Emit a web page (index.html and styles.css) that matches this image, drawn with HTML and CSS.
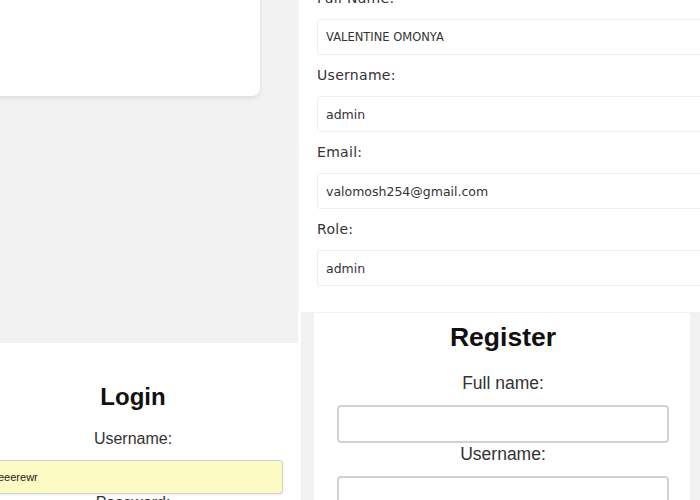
FILE: index.html
```html
<!DOCTYPE html>
<html lang="en">
<head>
<meta charset="utf-8">
<title>Screens</title>
<link rel="stylesheet" href="styles.css">
</head>
<body>
<div class="collage">
  <div class="col col-left">
    <section class="shot dash">
      <div class="dash-card"></div>
    </section>
    <section class="shot login">
      <form class="login-form">
        <h2 class="login-title">Login</h2>
        <label class="login-label">Username:</label>
        <input class="login-input" type="text" value="eeerewr">
        <label class="login-label">Password:</label>
      </form>
    </section>
  </div>
  <div class="col col-right">
    <section class="shot profile">
      <form class="profile-form">
        <label class="p-label">Full Name:</label>
        <input class="p-input caps" type="text" value="VALENTINE OMONYA" readonly>
        <label class="p-label">Username:</label>
        <input class="p-input" type="text" value="admin" readonly>
        <label class="p-label">Email:</label>
        <input class="p-input" type="text" value="valomosh254@gmail.com" readonly>
        <label class="p-label">Role:</label>
        <input class="p-input" type="text" value="admin" readonly>
      </form>
    </section>
    <section class="shot register">
      <form class="reg-card">
        <h2 class="reg-title">Register</h2>
        <label class="reg-label">Full name:</label>
        <input class="reg-input" type="text">
        <label class="reg-label">Username:</label>
        <input class="reg-input" type="text">
      </form>
    </section>
  </div>
</div>
</body>
</html>
```
FILE: styles.css
```css
* { box-sizing: border-box; }
html, body { margin: 0; padding: 0; }
body {
  width: 700px;
  height: 500px;
  overflow: hidden;
  background: #ffffff;
  font-family: "Liberation Sans", Arial, sans-serif;
}
.collage {
  display: flex;
  width: 700px;
  height: 500px;
}
.col {
  display: flex;
  flex-direction: column;
  height: 500px;
}
.col-left { width: 298px; }
.col-right { flex: 1; background: #ffffff; min-width: 0; }
.shot { overflow: hidden; }

/* top-left: dashboard fragment */
.dash {
  height: 343px;
  flex-shrink: 0;
  background: #f2f2f2;
  padding-right: 1px;
}
.dash-card {
  width: 300px;
  height: 136px;
  margin: -40px 0 0 -40px;
  background: #ffffff;
  border-radius: 8px;
  box-shadow: 0 2px 5px rgba(0, 0, 0, 0.09);
}

/* bottom-left: login */
.login {
  flex: 1;
  background: #ffffff;
}
.login-form {
  display: flex;
  flex-direction: column;
  align-items: center;
  width: 300px;
  margin: 0 0 0 -17px;
  padding-top: 40px;
  color: #333333;
}
.login-form > * { flex-shrink: 0; }
.login-title {
  margin: 0;
  font-size: 24px;
  line-height: 28px;
  font-weight: 700;
  color: #111111;
}
.login-label {
  margin-top: 19px;
  font-size: 16px;
  line-height: 18px;
  color: #333333;
}
.login-input {
  width: 300px;
  height: 34px;
  margin-top: 12px;
  padding: 0 0 0 14px;
  border: 1px solid #cfcfcf;
  border-radius: 3px;
  background: #fdfbc4;
  font-family: "Liberation Sans", Arial, sans-serif;
  font-size: 11px;
  color: #222222;
  box-shadow: 0 1px 2px rgba(0, 0, 0, 0.08);
}
.login-input + .login-label { margin-top: 0; }

/* top-right: profile */
.profile {
  height: 312px;
  flex-shrink: 0;
  background: #ffffff;
  padding-left: 18px;
  border-left: 1px solid #f4f4f4;
}
.profile-form {
  display: flex;
  flex-direction: column;
  margin-top: -12px;
  font-family: "DejaVu Sans", sans-serif;
  color: #333333;
}
.profile-form > * { flex-shrink: 0; }
.p-label {
  font-size: 14px;
  line-height: 21px;
  margin-bottom: 10px;
  letter-spacing: 0.3px;
}
.p-input {
  width: 420px;
  height: 36px;
  margin-bottom: 10px;
  padding: 0 0 0 8px;
  border: 1px solid #efefef;
  border-radius: 3px;
  background: #ffffff;
  font-family: "DejaVu Sans", sans-serif;
  font-size: 12.5px;
  color: #333333;
  outline: none;
}
.p-input.caps { font-size: 11.5px; }

/* bottom-right: register */
.register {
  flex: 1;
  margin-left: 3px;
  background: #f2f2f2;
  padding: 1px 10px 0 13px;
}
.reg-card {
  display: flex;
  flex-direction: column;
  align-items: center;
  height: 100%;
  background: #ffffff;
  padding: 9px 21px 0 23px;
  color: #333333;
}
.reg-card > * { flex-shrink: 0; }
.reg-title {
  margin: 0;
  font-size: 26.5px;
  line-height: 30px;
  font-weight: 700;
  color: #111111;
}
.reg-label {
  margin-top: 21px;
  font-size: 17.5px;
  line-height: 21px;
  color: #333333;
}
.reg-input {
  width: 100%;
  height: 38px;
  margin-top: 11px;
  border: 2px solid #d2d2d6;
  border-radius: 4px;
  background: #ffffff;
}
.reg-input + .reg-label { margin-top: 1px; }
```
